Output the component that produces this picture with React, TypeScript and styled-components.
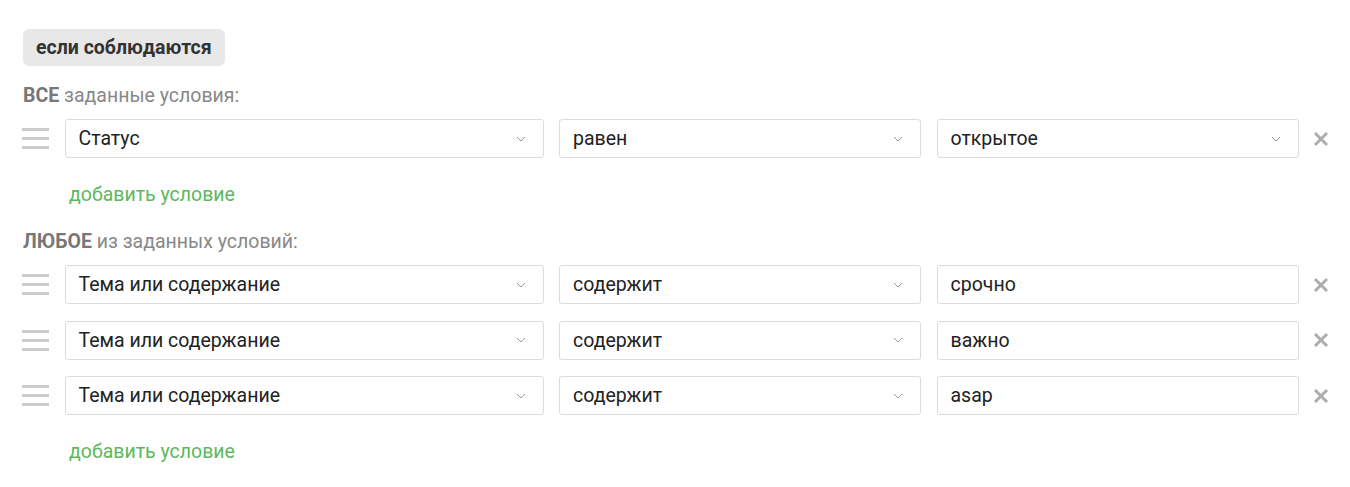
import styled, { createGlobalStyle } from "styled-components";

const GlobalStyle = createGlobalStyle`
  body {
    margin: 0;
    background: #fff;
    font-family: Roboto, "Noto Sans", sans-serif;
  }
`;

const Wrapper = styled.div`
  padding: 29px 0 0 22px;
  display: flex;
  flex-direction: column;
  align-items: flex-start;
`;

const Pill = styled.div`
  height: 37px;
  padding: 0 13px;
  margin-left: 1px;
  display: flex;
  align-items: center;
  background: #e8e8e8;
  border-radius: 6px;
  font-size: 19.5px;
  font-weight: 700;
  color: #333;
`;

const SectionLabel = styled.div<{ $top: number }>`
  margin: ${(p) => p.$top}px 0 0 1px;
  font-size: 19.5px;
  line-height: 22px;
  color: #888;

  b {
    color: #777;
    font-weight: 700;
  }
`;

const Rows = styled.div`
  margin-top: 12px;
  display: flex;
  flex-direction: column;
  gap: 16.5px;
`;

const Row = styled.div`
  display: grid;
  grid-template-columns: 27px 479px 362px 362px 16px;
  column-gap: 15.5px;
  align-items: center;
`;

const Handle = styled.div`
  display: flex;
  flex-direction: column;
  gap: 6px;

  span {
    display: block;
    height: 3px;
    background: #cccccc;
  }
`;

const Field = styled.div`
  height: 39px;
  box-sizing: border-box;
  border: 1px solid #dcdcdc;
  border-radius: 3px;
  background: #fff;
  padding: 0 17px 0 13px;
  display: flex;
  align-items: center;
  justify-content: space-between;
  font-size: 19.5px;
  color: #222;
`;

const Remove = styled.svg`
  width: 16px;
  height: 16px;
  margin-left: -1px;
`;

const AddLink = styled.a<{ $top: number }>`
  margin: ${(p) => p.$top}px 0 0 47px;
  font-size: 19.5px;
  line-height: 24px;
  color: #5cb85c;
  text-decoration: none;
  cursor: pointer;
`;

function Chevron() {
  return (
    <svg width="10" height="6" viewBox="0 0 10 6">
      <path d="M1 1l4 4 4-4" fill="none" stroke="#999" strokeWidth="1" />
    </svg>
  );
}

type Cond = { field: string; op: string; value: string; valueSelect?: boolean };

function ConditionRow({ c }: { c: Cond }) {
  return (
    <Row>
      <Handle>
        <span />
        <span />
        <span />
      </Handle>
      <Field>
        {c.field}
        <Chevron />
      </Field>
      <Field>
        {c.op}
        <Chevron />
      </Field>
      <Field>
        {c.value}
        {c.valueSelect && <Chevron />}
      </Field>
      <Remove viewBox="0 0 16 16">
        <path d="M2 2l12 12M14 2L2 14" stroke="#adadad" strokeWidth="3" />
      </Remove>
    </Row>
  );
}

const allConds: Cond[] = [
  { field: "Статус", op: "равен", value: "открытое", valueSelect: true },
];

const anyConds: Cond[] = [
  { field: "Тема или содержание", op: "содержит", value: "срочно" },
  { field: "Тема или содержание", op: "содержит", value: "важно" },
  { field: "Тема или содержание", op: "содержит", value: "asap" },
];

export default function App() {
  return (
    <>
      <GlobalStyle />
      <Wrapper>
        <Pill>если соблюдаются</Pill>

        <SectionLabel $top={19}>
          <b>ВСЕ</b> заданные условия:
        </SectionLabel>
        <Rows>
          {allConds.map((c, i) => (
            <ConditionRow key={i} c={c} />
          ))}
        </Rows>
        <AddLink $top={25}>добавить условие</AddLink>

        <SectionLabel $top={24}>
          <b>ЛЮБОЕ</b> из заданных условий:
        </SectionLabel>
        <Rows>
          {anyConds.map((c, i) => (
            <ConditionRow key={i} c={c} />
          ))}
        </Rows>
        <AddLink $top={25}>добавить условие</AddLink>
      </Wrapper>
    </>
  );
}
